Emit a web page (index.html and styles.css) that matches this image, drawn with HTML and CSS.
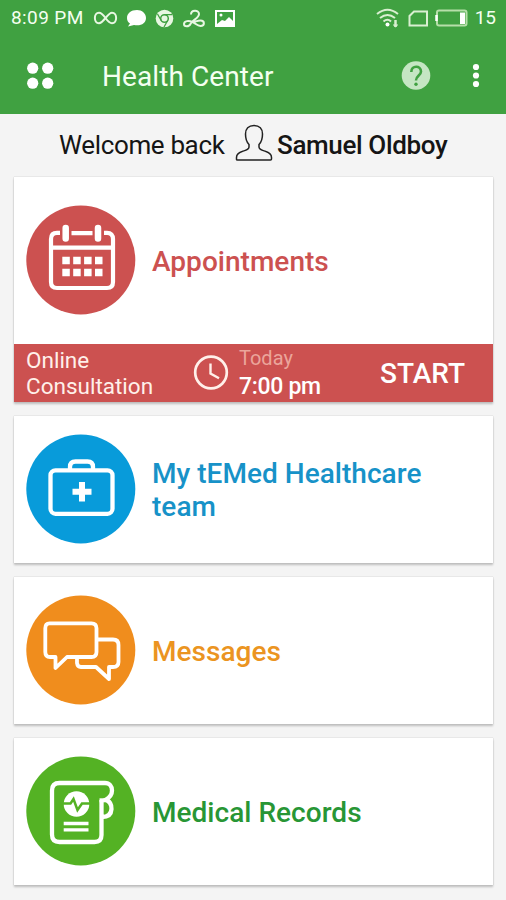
FILE: index.html
```html
<!DOCTYPE html>
<html lang="en">
<head>
<meta charset="utf-8">
<title>Health Center</title>
<link rel="stylesheet" href="styles.css">
</head>
<body>
<header class="top">
  <div class="status">
    <span class="time">8:09 PM</span>
    <svg class="status-left" width="144" height="24" viewBox="92 6 144 24" fill="none" stroke="#e8f7e2" stroke-width="2">
      <path d="M105.500 18C103 14.500 101.500 12.800 99 12.800C93.500 12.800 93.500 23.200 99 23.200C103.500 23.200 107.500 12.800 112 12.800C117.500 12.800 117.500 23.200 112 23.200C109.500 23.200 108 21.500 105.500 18"/>
      <path fill="#fff" stroke="none" d="M137 10C131 10 127 13.500 127 18C127 20.500 128 22.300 130 23.500L128 26.500L134 25C141 26.500 146 23 146 18C146 13.500 142 10 137 10Z"/>
      <circle cx="164.500" cy="18.500" r="8.800" fill="#e8f7e2" stroke="none"/>
      <circle cx="164.500" cy="18.500" r="3.800" stroke="#40a141" stroke-width="1.500"/>
      <path stroke="#40a141" stroke-width="1.300" d="M164.500 14.700H172M161.200 20.500L157.500 14M167.700 20.500L164 27"/>
      <path d="M191 14.500C191 9.500 199 9.500 199 14C199 18.500 192 20 190.500 24C189 27 184 27 184 24C184 20.500 189 20.500 192.500 22C196 23.500 197 26 200.500 26C205 26 205 20.500 200.500 20.500C197 20.500 195 22 192.500 22"/>
      <path fill="#fff" fill-rule="evenodd" stroke="none" d="M215 10H235V27H215ZM217 12V25H233V12Z"/>
      <path fill="#fff" stroke="none" d="M217 24L222 20L225 21L229 17L233 21V25H217Z"/><circle cx="221" cy="15" r="1.500" fill="#fff" stroke="none"/>
    </svg>
    <svg class="status-right" width="94" height="24" viewBox="375 6 94 24" fill="none" stroke="#d9efd1" stroke-width="2">
      <path d="M377 14Q387.500 5.500 398 14M380 18Q387.500 12 395 18M383.500 21.500Q387.500 18 391 21.500"/>
      <circle cx="387.500" cy="24.500" r="2" fill="#fff" stroke="none"/><path stroke-width="2.500" d="M395.500 20V27"/><path stroke-width="1.500" d="M393.500 24.500L395.500 26.500L397.500 24.500"/>
      <path d="M409.500 25.500V16L414 11.500H427V25.500Z"/>
      <rect x="437" y="10.500" width="29.500" height="15" rx="2" stroke="#b6dfa9"/><path stroke="#fff" stroke-width="2.500" d="M436.500 15V21"/><rect x="460" y="12.500" width="5" height="11.500" fill="#fff" stroke="none"/>
    </svg>
    <span class="battery">15</span>
  </div>
  <div class="appbar">
    <svg class="menu" width="28" height="28" viewBox="0 0 28 28" fill="#fff"><circle cx="6.700" cy="6.200" r="5.600"/><circle cx="21.700" cy="6.200" r="5.600"/><circle cx="6.700" cy="21.200" r="5.600"/><circle cx="21.700" cy="21.200" r="5.600"/></svg>
    <h1 class="title">Health Center</h1>
    <svg class="help" width="30" height="30" viewBox="0 0 30 30"><circle cx="15" cy="14.500" r="14.300" fill="#c5e6c3"/><path d="M10.300 11C10.300 4 20 4 20 10.500C20 14.500 15 14.500 15 19.500" fill="none" stroke="#40a141" stroke-width="2.600"/><circle cx="15" cy="23.300" r="1.700" fill="#40a141"/></svg>
    <svg class="more" width="8" height="26" viewBox="0 0 8 26" fill="#fff"><circle cx="4" cy="4" r="3.100"/><circle cx="4" cy="12.500" r="3.100"/><circle cx="4" cy="21" r="3.100"/></svg>
  </div>
</header>
<main class="content">
  <div class="welcome">
    <span class="greeting">Welcome back</span>
    <svg class="person" width="38" height="38" viewBox="0 0 38 38" fill="none" stroke="#222" stroke-width="1.500"><path d="M19 1.500C13.500 1.500 10.500 5 10.500 10C10.500 14.500 11.500 18 14 20.500V23C14 26 11 26 7 27.500C3 28.800 1.500 30.500 1.500 33.500V35.500Q1.500 36 2.500 36H35.500Q36.500 36 36.500 35V33.500C36.500 30.500 35 28.800 31 27.500C27 26 24 26 24 23V20.500C26.500 18 27.500 14.500 27.500 10C27.500 5 24.500 1.500 19 1.500Z"/></svg>
    <span class="name">Samuel Oldboy</span>
  </div>
  <section class="card">
    <div class="row row-tall">
      <svg class="icon" viewBox="0 0 110 110" fill="none" stroke="#fff" stroke-width="4.200"><circle cx="54.800" cy="55" r="54.500" fill="#cc5150" stroke="none"/>
        <path d="M34 27.800H31Q25 27.800 25 34V77Q25 83 31 83H81Q87 83 87 77V34Q87 27.800 81 27.800H78M45.500 28.200H66.500M25 42.600H87"/>
        <path stroke-width="6.500" stroke-linecap="round" d="M39.700 23V33.500M72 23V33.500"/>
        <path stroke-width="7.500" stroke-dasharray="7.500 3.400" d="M36.300 55.500H77M36.300 67.500H77"/></svg>
      <h2 class="label red">Appointments</h2>
    </div>
    <div class="booking">
      <span class="kind">Online<br>Consultation</span>
      <svg class="clock" width="36" height="36" viewBox="0 0 36 36" fill="none" stroke="#fff0ea"><circle cx="18" cy="17.500" r="15.800" stroke-width="2.700"/><path stroke-width="2.400" d="M17.500 8.500V18.500L26 23.300"/></svg>
      <div class="when"><span class="day">Today</span><span class="hour">7:00 pm</span></div>
      <span class="start">START</span>
    </div>
  </section>
  <section class="card">
    <div class="row">
      <svg class="icon" viewBox="0 0 110 110" fill="none" stroke="#fff" stroke-width="4.300"><circle cx="54.800" cy="55" r="54.500" fill="#089bda" stroke="none"/>
        <rect x="24.500" y="36.300" width="62" height="43.500" rx="5"/><path d="M44 36V33Q44 27.500 49.500 27.500H61.500Q67 27.500 67 33V36"/><path stroke-width="6" d="M56 48V67.500M46.500 57.800H65.500"/></svg>
      <h2 class="label blue">My tEMed Healthcare team</h2>
    </div>
  </section>
  <section class="card">
    <div class="row">
      <svg class="icon" viewBox="0 0 110 110" fill="none" stroke="#fff" stroke-width="3.800" stroke-linejoin="round"><circle cx="54.800" cy="55" r="54.500" fill="#f08d1d" stroke="none"/>
        <path d="M72 44.500H87Q92.500 44.500 92.500 50V67Q92.500 72 87 72H83V84L70 72H55Q51.500 72 51 68V63"/>
        <path fill="#f08d1d" d="M23.500 28.300H65.500Q70.500 28.300 70.500 33.300V57Q70.500 62 65.500 62H41L29.500 73V62H24Q19.300 62 19.300 57V33.300Q19.300 28.300 23.500 28.300Z"/></svg>
      <h2 class="label orange">Messages</h2>
    </div>
  </section>
  <section class="card">
    <div class="row">
      <svg class="icon" viewBox="0 0 110 110" fill="none" stroke="#fff" stroke-width="4.300"><circle cx="54.800" cy="55" r="54.500" fill="#54b224" stroke="none"/>
        <path d="M75.500 44V79Q75.500 86 68.500 86H33.500Q26 86 26 78.500V34.500Q26 27 33.500 27H79C83.500 27 86 30.500 86 34.500C86 39 83.500 41.500 80 43.500C84.500 46 85.800 49 85.500 53C85.200 58.500 81.500 61 76 61"/><path stroke-width="4" d="M73.500 44.300H81"/>
        <circle cx="50.500" cy="48" r="12.800" fill="#fff" stroke="none"/><path stroke="#54b224" stroke-width="2.500" d="M36 47.500H44.500L47.500 43L51.500 54L56 47.500H65"/>
        <path stroke-width="3.300" d="M37.700 67.500H62.500M37.700 73.800H62.500"/></svg>
      <h2 class="label green">Medical Records</h2>
    </div>
  </section>
</main>
</body>
</html>
```

FILE: styles.css
```css
* { box-sizing: border-box; }
body {
  margin: 0;
  height: 900px;
  overflow: hidden;
  background: #f4f4f4;
  color: #151515;
  font-family: Roboto, "Liberation Sans", sans-serif;
}
svg { display: block; flex: none; }
.top { height: 114px; background: #40a141; color: #f4fff0; }
.status {
  display: flex;
  align-items: center;
  height: 37px;
  padding: 0 10px 1px 11px;
  font-size: 19px;
  line-height: 24px;
}
.time { width: 81px; letter-spacing: 0.4px; white-space: nowrap; }
.status-right { margin-left: 139px; }
.battery { margin-left: 6px; }
.appbar { display: flex; align-items: center; height: 77px; padding: 0 0 0 26px; }
.title {
  width: 274px;
  margin: 2px 25px 0 48px;
  font-size: 28px;
  font-weight: 400;
  line-height: 34px;
  letter-spacing: 0.08px;
  white-space: nowrap;
}
.more { margin-left: 41px; }
.content { display: flex; flex-direction: column; gap: 14px; padding: 0 13px 0 14px; }
.welcome {
  display: flex;
  align-items: center;
  height: 49px;
  padding: 12px 0 0 45px;
  font-size: 26px;
  line-height: 32px;
  letter-spacing: -0.36px;
  white-space: nowrap;
}
.greeting { width: 176px; }
.person { margin-top: -3px; }
.name { margin-left: 4px; font-weight: 500; }
.card { background: #fff; box-shadow: 0 2px 2px #bdbdbd, 0 0 1px #aaa; }
.row { display: flex; align-items: center; height: 147px; padding: 0 50px 2px 12px; }
.row-tall { height: 167px; padding-bottom: 1px; }
.icon { width: 110px; height: 110px; }
.label { margin: 3px 0 0 16px; font-size: 28px; font-weight: 500; line-height: 33px; letter-spacing: 0.03px; }
.red { color: #cc5150; }
.blue { color: #1792c8; }
.orange { color: #eb9421; }
.green { color: #289635; }
.booking {
  display: flex;
  align-items: center;
  height: 58px;
  padding-left: 12px;
  background: #cc5150;
  color: #fff0ea;
}
.kind { width: 167px; font-size: 22.500px; line-height: 26.500px; }
.when { display: flex; flex-direction: column; width: 141px; margin-left: 10px; }
.day { color: #eba59b; font-size: 20px; line-height: 28px; }
.hour { color: #fff; font-size: 23px; font-weight: 500; line-height: 30px; letter-spacing: -0.3px; }
.start { margin-top: 2px; color: #fff; font-size: 28px; font-weight: 500; line-height: 34px; }
```
